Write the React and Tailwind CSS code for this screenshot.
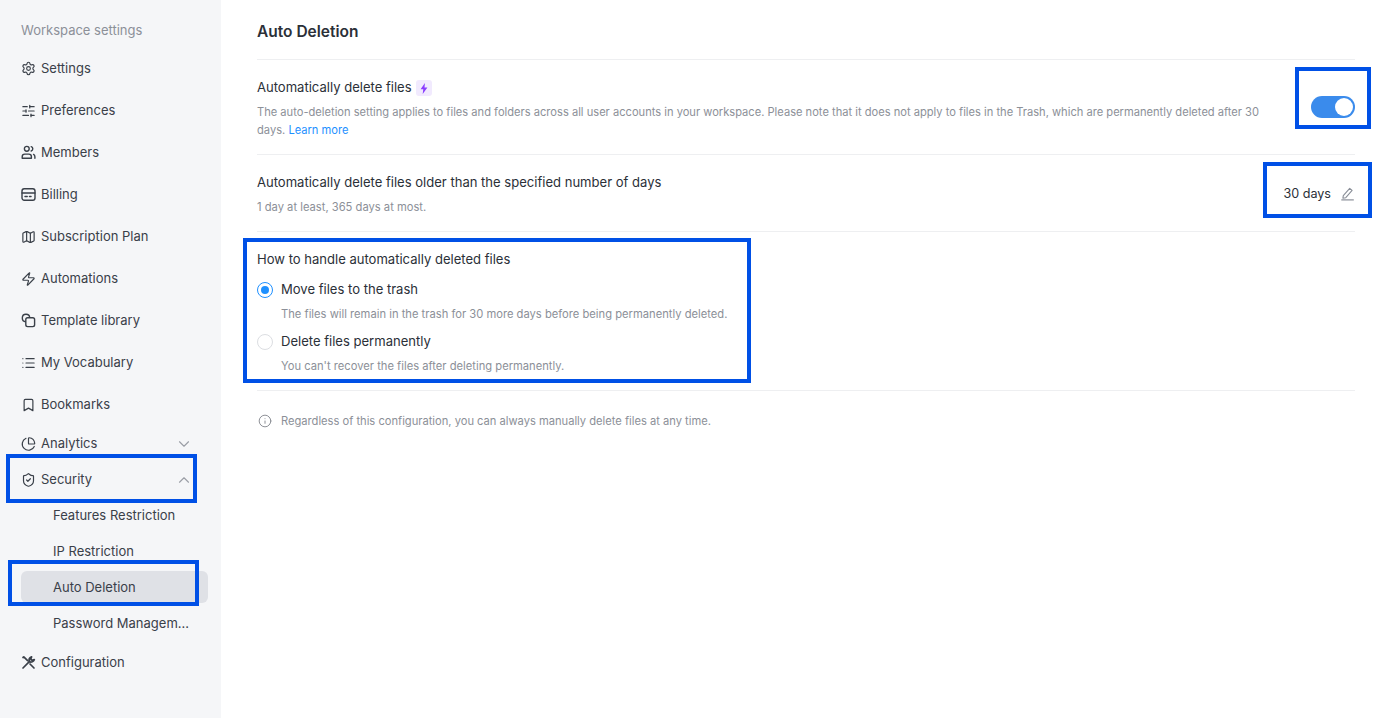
import React from "react";
import {
  Settings,
  SlidersHorizontal,
  Map,
  Zap,
  List,
  Bookmark,
  ChartPie,
  ShieldCheck,
  ChevronDown,
  ChevronUp,
  Info,
} from "lucide-react";

function MembersIcon() {
  return (
    <svg width="15" height="15" viewBox="0 0 15 15" fill="none" stroke="currentColor" strokeWidth="1.4" strokeLinecap="round" strokeLinejoin="round">
      <circle cx="5.8" cy="3.8" r="2.4" />
      <path d="M1.2 13.3v-1.6c0-1.5 1.2-2.6 2.6-2.6h4c1.4 0 2.6 1.1 2.6 2.6v1.6z" />
      <path d="M10.2 1.6c1 .3 1.6 1.2 1.6 2.2s-.6 1.900-1.600 2.200" />
      <path d="M12.600 9.400c.8.400 1.300 1.300 1.300 2.300v1.600" />
    </svg>
  );
}

function BillingIcon() {
  return (
    <svg width="15" height="15" viewBox="0 0 15 15" fill="none" stroke="currentColor" strokeWidth="1.4" strokeLinecap="round">
      <rect x="1" y="1.800" width="13" height="11.400" rx="2.200" />
      <path d="M1 6h13" />
      <path d="M4 9.500h2.200M8.500 9.500h1.500" strokeWidth="1.500" />
    </svg>
  );
}

function TemplateIcon() {
  return (
    <svg width="15" height="15" viewBox="0 0 15 15" fill="none" stroke="currentColor" strokeWidth="1.4" strokeLinejoin="round">
      <path d="M4.800 8.700a3.700 3.700 0 1 1 3.900-3.900" />
      <rect x="4.800" y="4.800" width="8.800" height="8.800" rx="1.800" />
    </svg>
  );
}

function ToolsIcon() {
  return (
    <svg width="15" height="15" viewBox="0 0 15 15" fill="none" stroke="currentColor" strokeWidth="1.700" strokeLinecap="round" strokeLinejoin="round">
      <path d="M2 13L8.800 6.200" />
      <path d="M8.300 6.700c-.6-1.900.3-4 2.300-4.800l-.9 2.200 1.400 1.300 2.200-.8c-.7 2-2.900 3-5 2.100z" />
      <path d="M2 2.500L2.800 1.800l3.800 3.800M9 9l4 4" />
    </svg>
  );
}

function Bolt() {
  return (
    <svg width="8" height="11" viewBox="0 0 8 11" fill="#8b3dff">
      <path d="M4.900 0L.6 6.200h2.700L2.700 11 7.400 4.500H4.500z" />
    </svg>
  );
}

function PencilIcon() {
  return (
    <svg width="15" height="15" viewBox="0 0 15 15" fill="none" stroke="#8a8f98" strokeWidth="1.100" strokeLinejoin="round">
      <path d="M3.300 9.600L9.700 2.300l2.400 2.100-6.300 7.300-2.900.5z" />
      <path d="M1.300 13.900h12.500" strokeWidth="1.200" />
    </svg>
  );
}

const navTop = [
  { label: "Settings", icon: <Settings size={19} strokeWidth={1.8} /> },
  { label: "Preferences", icon: <SlidersHorizontal size={18} strokeWidth={1.9} /> },
  { label: "Members", icon: <MembersIcon /> },
  { label: "Billing", icon: <BillingIcon /> },
  { label: "Subscription Plan", icon: <Map size={18} strokeWidth={1.9} /> },
  { label: "Automations", icon: <Zap size={18} strokeWidth={1.9} /> },
  { label: "Template library", icon: <TemplateIcon /> },
  { label: "My Vocabulary", icon: <List size={18} strokeWidth={1.9} /> },
  { label: "Bookmarks", icon: <Bookmark size={18} strokeWidth={1.9} /> },
];

const subItems = ["Features Restriction", "IP Restriction", "Auto Deletion", "Password Managem..."];

function NavItem({ item }) {
  return (
    <div className="flex h-[42px] items-center gap-[5px] pl-[21px] pt-[1px] text-[#3a4049]">
      <span className="flex h-[15px] w-[15px] items-center justify-center">{item.icon}</span>
      <span>{item.label}</span>
    </div>
  );
}

function Sidebar() {
  return (
    <aside className="w-[221px] shrink-0 bg-[#f5f6f8] pr-[13px] text-[13px]">
      <div className="flex h-[47px] items-end pb-[7px] pl-[21px] text-[#8c9098]">Workspace settings</div>
      {navTop.map((item) => (
        <NavItem key={item.label} item={item} />
      ))}
      <div className="flex h-[36px] items-center gap-[5px] pl-[21px] pr-[15px] pt-[1px] text-[#3a4049]">
        <span className="flex h-[15px] w-[15px] items-center justify-center">
          <ChartPie size={18} strokeWidth={1.9} />
        </span>
        <span className="flex-1">Analytics</span>
        <ChevronDown size={18} strokeWidth={1.5} className="text-[#9a9ea6]" />
      </div>
      <div className="flex h-[36px] items-center gap-[5px] pl-[21px] pr-[15px] pt-[1px] text-[#3a4049]">
        <span className="flex h-[15px] w-[15px] items-center justify-center">
          <ShieldCheck size={18} strokeWidth={1.9} />
        </span>
        <span className="flex-1">Security</span>
        <ChevronUp size={18} strokeWidth={1.5} className="text-[#9a9ea6]" />
      </div>
      {subItems.map((label) => (
        <div key={label} className="h-[36px] py-[2px] pl-[21px]">
          <div className={`flex h-[32px] items-center rounded-md pl-[32px] pt-[1px] text-[#3a4049] ${label === "Auto Deletion" ? "bg-[#dfe1e6]" : ""}`}>
            {label}
          </div>
        </div>
      ))}
      <NavItem item={{ label: "Configuration", icon: <ToolsIcon /> }} />
    </aside>
  );
}

function Radio({ checked }) {
  return (
    <span className={`flex h-4 w-4 items-center justify-center rounded-full border bg-white ${checked ? "border-[#1e90ff]" : "border-[#dcdee2]"}`}>
      {checked && <span className="h-2 w-2 rounded-full bg-[#1e90ff]" />}
    </span>
  );
}

function Option({ checked, title, desc, height }) {
  return (
    <div className={height}>
      <div className="flex h-[20px] items-center gap-2 text-[#2b3038]">
        <Radio checked={checked} />
        <span>{title}</span>
      </div>
      <div className="mt-[5px] pl-6 text-[11.2px] leading-[18px] text-[#8c9098]">{desc}</div>
    </div>
  );
}

function Main() {
  return (
    <main className="flex-1 pl-[36px] pr-[29px] text-[13.05px]">
      <h1 className="flex h-[60px] items-center border-b border-[#eeeff1] pt-[4px] text-[15.5px] font-semibold text-[#2b3038]">
        Auto Deletion
      </h1>

      <section className="flex h-[95px] items-start border-b border-[#eeeff1]">
        <div className="min-w-0 flex-1 pt-[18px]">
          <div className="flex h-[20px] items-center gap-[4px] text-[#2b3038]">
            Automatically delete files
            <span className="flex h-4 w-4 items-center justify-center rounded-[3px] bg-[#f1eafe]">
              <Bolt />
            </span>
          </div>
          <p className="mt-[5px] max-w-[1010px] text-[11.14px] leading-[18px] text-[#8c9098]">
            The auto-deletion setting applies to files and folders across all user accounts in your workspace. Please note that it does not apply to files in the Trash, which are permanently deleted after 30 days.{" "}
            <span className="text-[#1e90ff]">Learn more</span>
          </p>
        </div>
        <div className="mt-[36px] flex h-[22px] w-[44px] items-center justify-end rounded-full bg-[#3a8bec] pr-[2px]">
          <span className="h-[18px] w-[18px] rounded-full bg-white" />
        </div>
      </section>

      <section className="flex h-[77px] items-center border-b border-[#eeeff1]">
        <div className="flex-1 pt-[2px]">
          <div className="flex h-[20px] items-center text-[#2b3038]">
            Automatically delete files older than the specified number of days
          </div>
          <div className="mt-[5px] text-[11.2px] leading-[18px] text-[#8c9098]">1 day at least, 365 days at most.</div>
        </div>
        <div className="mt-[3px] flex items-center gap-[9px] text-[12.6px] text-[#2b3038]">
          30 days
          <span className="-mt-[2px]">
            <PencilIcon />
          </span>
        </div>
      </section>

      <section className="h-[159px] border-b border-[#eeeff1] pt-[18px]">
        <div className="mb-[10px] flex h-[20px] items-center text-[#2b3038]">How to handle automatically deleted files</div>
        <Option
          checked
          title="Move files to the trash"
          desc="The files will remain in the trash for 30 more days before being permanently deleted."
          height="h-[52px]"
        />
        <Option
          title="Delete files permanently"
          desc="You can't recover the files after deleting permanently."
          height="h-[50px]"
        />
      </section>

      <div className="mt-[21px] flex h-[18px] items-center gap-[9px] pl-[1px] text-[11.15px] text-[#8c9098]">
        <span className="flex h-[14px] w-[14px] items-center justify-center">
          <Info size={16} strokeWidth={1.6} className="text-[#85898f]" />
        </span>
        Regardless of this configuration, you can always manually delete files at any time.
      </div>
    </main>
  );
}

export default function App() {
  return (
    <div className="relative flex h-[718px] w-[1384px] overflow-hidden bg-white font-['Inter',sans-serif]">
      <Sidebar />
      <Main />
      {/* annotation boxes drawn on top of the screenshot */}
      <div className="absolute left-[6px] top-[454px] h-[49px] w-[191px] border-[4px] border-[#0050e6]" />
      <div className="absolute left-[8px] top-[560px] h-[46px] w-[191px] border-[4px] border-[#0050e6]" />
      <div className="absolute left-[1295px] top-[67px] h-[62px] w-[76px] border-[4px] border-[#0050e6]" />
      <div className="absolute left-[1263px] top-[162px] h-[56px] w-[109px] border-[4px] border-[#0050e6]" />
      <div className="absolute left-[243px] top-[238px] h-[145px] w-[508px] border-[4px] border-[#0050e6]" />
    </div>
  );
}
